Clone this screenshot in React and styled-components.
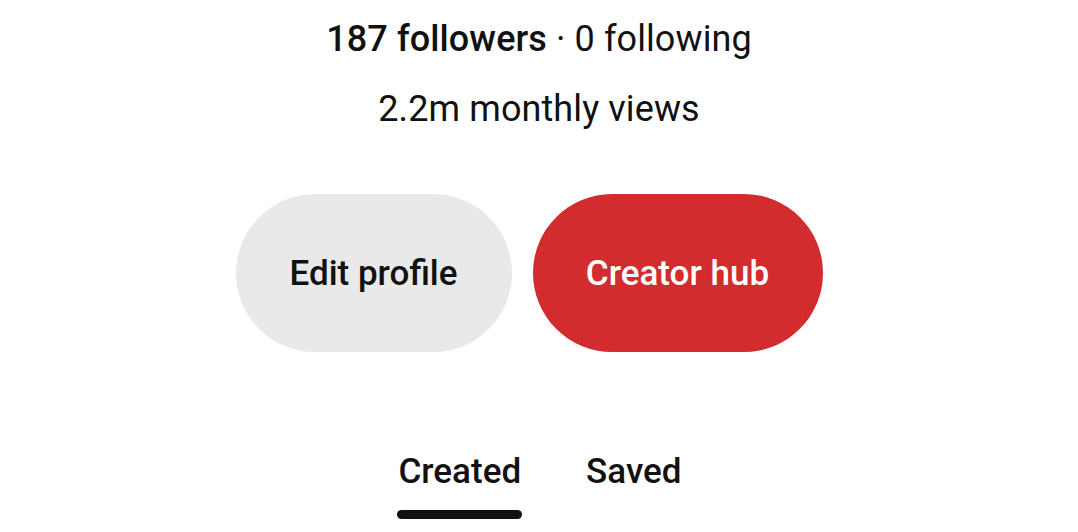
import React from "react";
import styled, { createGlobalStyle } from "styled-components";

const GlobalStyle = createGlobalStyle`
  body {
    margin: 0;
    background: #ffffff;
    font-family: Roboto, "Noto Sans", sans-serif;
    color: #111111;
  }
`;

const Page = styled.div`
  width: 1078px;
  height: 532px;
  display: flex;
  flex-direction: column;
  align-items: center;
  overflow: hidden;
`;

const Stats = styled.div`
  margin-top: 17px;
  font-size: 36px;
  line-height: 44px;
  letter-spacing: 0.1px;
`;

const Strong = styled.span`
  font-weight: 500;
`;

const Views = styled.div`
  margin-top: 26px;
  font-size: 36px;
  line-height: 44px;
  letter-spacing: 0.1px;
`;

const Actions = styled.div`
  display: flex;
  gap: 21px;
  margin-top: 63px;
  margin-right: 20px;
`;

const PillButton = styled.button`
  height: 158px;
  width: ${(p) => p.width}px;
  border: none;
  border-radius: 79px;
  background: ${(p) => (p.primary ? "#d32c2f" : "#e9e9e9")};
  color: ${(p) => (p.primary ? "#ffffff" : "#111111")};
  font-family: Roboto, sans-serif;
  font-size: 35px;
  font-weight: 500;
  padding: 0;
  cursor: pointer;
`;

const Tabs = styled.div`
  display: flex;
  gap: 65px;
  margin-top: 98px;
  margin-left: 2px;
`;

const Tab = styled.div`
  display: flex;
  flex-direction: column;
  align-items: center;
  font-size: 35px;
  font-weight: 500;
  line-height: 44px;
`;

const Underline = styled.div`
  margin-top: 16px;
  width: calc(100% + 2px);
  height: 9px;
  border-radius: 5px;
  background: ${(p) => (p.active ? "#111111" : "transparent")};
`;

export default function App() {
  return (
    <>
      <GlobalStyle />
      <Page>
        <Stats>
          <Strong>187 followers</Strong> · 0 following
        </Stats>
        <Views>2.2m monthly views</Views>
        <Actions>
          <PillButton width={276}>Edit profile</PillButton>
          <PillButton width={290} primary>
            Creator hub
          </PillButton>
        </Actions>
        <Tabs>
          <Tab>
            Created
            <Underline active />
          </Tab>
          <Tab>
            Saved
            <Underline />
          </Tab>
        </Tabs>
      </Page>
    </>
  );
}
